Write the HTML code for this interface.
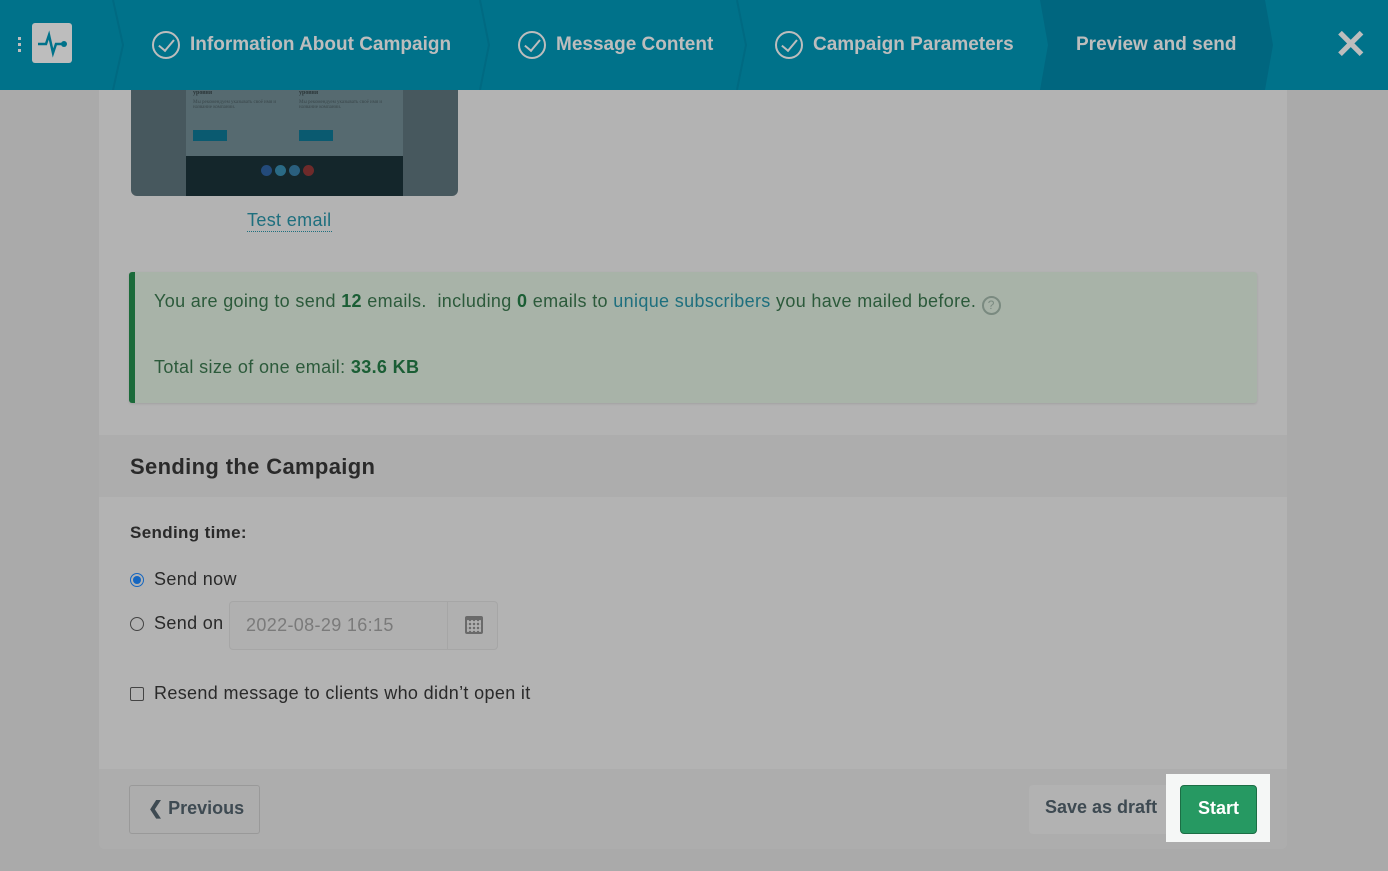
<!DOCTYPE html>
<html><head><meta charset="utf-8"><style>
*{box-sizing:border-box;margin:0;padding:0}
body{width:1388px;height:871px;overflow:hidden;background:#aaaaaa;font-family:"Liberation Sans",sans-serif;position:relative}
.top{position:absolute;left:0;top:0;width:1388px;height:90px;background:#00728a}
.step{position:absolute;top:0;height:90px;color:#bdbdbd;font-size:19px;font-weight:bold;display:flex;align-items:center}
.chk{width:28px;height:28px;border:2px solid #bdbdbd;border-radius:50%;margin-right:10px;position:relative}
.chk:after{content:"";position:absolute;left:8px;top:3px;width:7px;height:13px;border-right:2px solid #bdbdbd;border-bottom:2px solid #bdbdbd;transform:rotate(40deg)}
.card{position:absolute;left:99px;top:90px;width:1188px;height:759px;background:#b3b3b3;border-radius:0 0 6px 6px}
.abs{position:absolute}
.t{letter-spacing:0.35px}
</style></head><body>
<div class="top">
 <svg class="abs" style="left:0;top:0" width="1388" height="90">
  <polygon points="1040,0 1265,0 1273,45 1265,90 1040,90 1048,45" fill="#00667f"/>
  <g stroke="#006a82" stroke-width="2" fill="none">
   <polyline points="113,0 123,45 113,90"/><polyline points="480,0 489,45 480,90"/><polyline points="737,0 746,45 737,90"/>
  </g>
 </svg>
 <div class="abs" style="left:18px;top:37px;width:3px;height:3px;background:#bdbdbd;box-shadow:0 6px #bdbdbd,0 12px #bdbdbd"></div>
 <div class="abs" style="left:32px;top:23px;width:40px;height:40px;background:#bdbdbd;border-radius:3px">
  <svg width="40" height="40"><polyline points="6,21 14,21 17,12 21,30 24,21 32,21" stroke="#00728a" stroke-width="2.5" fill="none"/><circle cx="32" cy="21" r="3" fill="#00728a"/></svg>
 </div>
 <div class="step" style="left:152px"><span class="chk"></span>Information About Campaign</div>
 <div class="step" style="left:518px"><span class="chk"></span>Message Content</div>
 <div class="step" style="left:775px"><span class="chk"></span>Campaign Parameters</div>
 <div class="step" style="left:1076px">Preview and send</div>
 <div class="step" style="left:1334px;font-size:40px;font-weight:bold">✕</div>
</div>
<div class="card">
 <div class="abs" style="left:32px;top:0;width:327px;height:106px;background:#47585e;border-radius:0 0 6px 6px;overflow:hidden">
  <div class="abs" style="left:55px;top:0;width:217px;height:66px;background:#566a70;font-family:'Liberation Serif',serif;font-size:6px;color:#2a3538;padding:0 7px">
   <div class="abs" style="left:7px;top:0;font-weight:bold">уровня</div><div class="abs" style="left:113px;top:0;font-weight:bold">уровня</div>
   <div class="abs" style="left:7px;top:10px;width:90px;height:22px;font-size:5px;color:#3a474b">Мы рекомендуем указывать своё имя и название компании.</div>
   <div class="abs" style="left:113px;top:10px;width:90px;height:22px;font-size:5px;color:#3a474b">Мы рекомендуем указывать своё имя и название компании.</div>
   <div class="abs" style="left:7px;top:40px;width:34px;height:11px;background:#0a5a70"></div><div class="abs" style="left:113px;top:40px;width:34px;height:11px;background:#0a5a70"></div>
  </div>
  <div class="abs" style="left:55px;top:66px;width:217px;height:40px;background:#14262b"></div>
  <div class="abs" style="left:130px;top:75px;width:11px;height:11px;border-radius:50%;background:#234a7a;box-shadow:14px 0 #2a6a85,28px 0 #2a5f7e,42px 0 #6e2a2a"></div>
 </div>
 <div class="abs t" style="left:148px;top:120px;font-size:18px;color:#1e6f7e;border-bottom:1px dotted #1e6f7e;line-height:21px">Test email</div>
 <div class="abs t" style="left:30px;top:182px;width:1128px;height:131px;background:#a8b3a8;border-left:6px solid #1b6a3a;border-radius:3px;box-shadow:0 1px 2px rgba(0,0,0,.1);font-size:18px;color:#2c5a3b">
  <div class="abs" style="left:19px;top:19px;white-space:nowrap">You are going to send <b style="color:#1b5e35">12</b> emails.&nbsp; including <b style="color:#1b5e35">0</b> emails to <span style="color:#1e6f7e">unique subscribers</span> you have mailed before. <span style="display:inline-block;width:19px;height:19px;border:2px solid #7a8a80;border-radius:50%;font-size:12px;text-align:center;line-height:15px;color:#7a8a80;vertical-align:-2px;letter-spacing:0">?</span></div>
  <div class="abs" style="left:19px;top:85px">Total size of one email: <b style="color:#1b5e35">33.6 KB</b></div>
 </div>
 <div class="abs t" style="left:0;top:345px;width:1188px;height:62px;background:#adadad;font-size:22px;font-weight:bold;color:#2a2a2a;padding:19px 31px">Sending the Campaign</div>
 <div class="abs t" style="left:31px;top:433px;font-size:17px;font-weight:bold;color:#2a2a2a">Sending time:</div>
 <div class="abs" style="left:31px;top:483px;width:14px;height:14px;border-radius:50%;border:1px solid #1566c0;background:#b3b3b3"><div style="margin:2px;width:8px;height:8px;border-radius:50%;background:#1566c0"></div></div>
 <div class="abs t" style="left:55px;top:479px;font-size:18px;color:#2a2a2a">Send now</div>
 <div class="abs" style="left:31px;top:527px;width:14px;height:14px;border-radius:50%;border:1px solid #444"></div>
 <div class="abs t" style="left:55px;top:523px;font-size:18px;color:#2a2a2a">Send on</div>
 <div class="abs" style="left:130px;top:511px;width:269px;height:49px;border:1px solid #a6a6a6;border-radius:4px;background:#b0b0b0">
  <div class="abs t" style="left:16px;top:13px;font-size:18px;color:#7a7a7a">2022-08-29 16:15</div>
  <div class="abs" style="left:217px;top:0;width:1px;height:47px;background:#a6a6a6"></div>
  <div class="abs" style="left:235px;top:14px;width:18px;height:18px;border:2px solid #6a6a6a;border-top-width:4px;border-radius:2px;background:radial-gradient(circle,#6a6a6a 1px,transparent 1.5px) 1px 2px/4px 4px"></div>
 </div>
 <div class="abs" style="left:31px;top:597px;width:14px;height:14px;border:1px solid #444;border-radius:2px"></div>
 <div class="abs t" style="left:55px;top:593px;font-size:18px;color:#2a2a2a">Resend message to clients who didn’t open it</div>
 <div class="abs" style="left:0;top:679px;width:1188px;height:80px;background:#adadad;border-radius:0 0 6px 6px"></div>
 <div class="abs" style="left:30px;top:695px;width:131px;height:49px;border:1px solid #999;border-radius:3px;font-size:18px;font-weight:bold;color:#3e4a52;padding:12px 0 0 18px">❮ Previous</div>
 <div class="abs" style="left:930px;top:695px;width:144px;height:49px;background:#b2b2b2;border-radius:4px;font-size:18px;font-weight:bold;color:#3e4a52;padding:12px 0 0 16px">Save as draft</div>
</div>
<div class="abs" style="left:1166px;top:774px;width:104px;height:68px;background:#f5f7f6"></div>
<div class="abs" style="left:1180px;top:785px;width:77px;height:49px;background:#269962;border:1px solid #1c6e45;border-radius:4px;color:#fff;font-size:18px;font-weight:bold;text-align:center;line-height:45px">Start</div>
</body></html>
